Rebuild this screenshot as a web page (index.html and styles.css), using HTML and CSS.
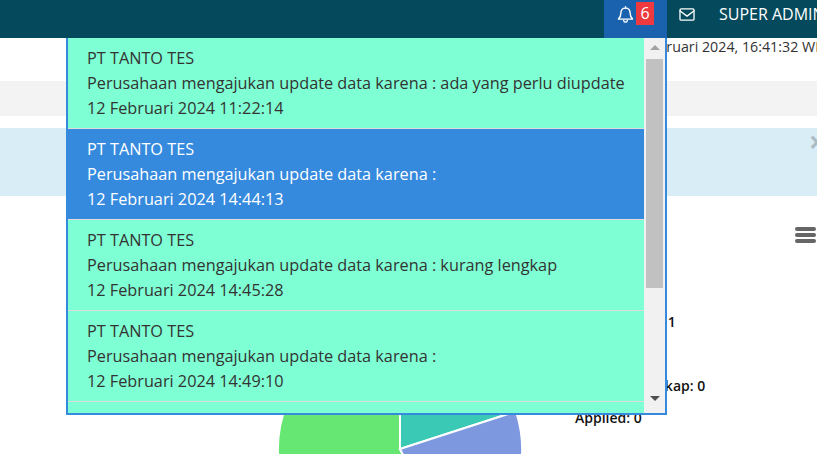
FILE: index.html
```html
<!DOCTYPE html>
<html>
  <head>
    <meta charset="utf-8">
    <title>Dashboard</title>
    <link rel="stylesheet" href="styles.css">
  </head>
  <body>
    <header class="topbar">
      <a href="#" class="nav-item notif">
        <svg class="icon" viewBox="0 0 24 24" width="17" height="19">
          <path d="M12 3c-4 0-6.500 3-6.500 7 0 4.500-1.500 6.500-3.500 8.500h20c-2-2-3.500-4-3.500-8.500 0-4-2.500-7-6.500-7z"/>
          <path d="M12 1v2M9.500 20.500c.3 1.500 1.300 2.300 2.500 2.300s2.200-.8 2.500-2.300"/>
        </svg>
        <span class="badge">6</span>
      </a>
      <a href="#" class="nav-item mail">
        <svg class="icon" viewBox="0 0 24 20" width="16" height="13">
          <rect x="1.200" y="1.200" width="21.600" height="17.600" rx="2"/>
          <path d="M1.500 4.500l10.500 8 10.500-8"/>
        </svg>
      </a>
      <a href="#" class="nav-item user">SUPER ADMINISTRATOR</a>
    </header>

    <main class="content">
      <div class="clock">Senin, 12 Februari 2024, 16:41:32 WIB</div>
      <div class="breadcrumb"></div>
      <div class="alert"><span class="alert-close">×</span></div>

      <section class="panel">
        <div class="panel-tools">
          <a href="#" class="burger"><span></span><span></span><span></span></a>
        </div>
        <div class="chart-row">
          <svg class="pie" viewBox="0 0 244 244" width="244" height="244">
            <path class="slice-green" d="M122 122L178.700 230A122 122 0 1 1 122 0z"/>
            <path class="slice-teal" d="M122 122V0A122 122 0 0 1 238 84.400z"/>
            <path class="slice-blue" d="M122 122L238 84.400A122 122 0 0 1 178.700 230z"/>
          </svg>
          <ul class="legend">
            <li>Data Update: 1</li>
            <li>Disetujui: 0</li>
            <li>Belum Dilengkap: 0</li>
            <li>Applied: 0</li>
          </ul>
        </div>
      </section>
    </main>

    <div class="notif-menu">
      <div class="notif-list">
        <a href="#" class="notif-row">
          PT TANTO TES<br>
          Perusahaan mengajukan update data karena : ada yang perlu diupdate<br>
          12 Februari 2024 11:22:14
        </a>
        <a href="#" class="notif-row active">
          PT TANTO TES<br>
          Perusahaan mengajukan update data karena :<br>
          12 Februari 2024 14:44:13
        </a>
        <a href="#" class="notif-row">
          PT TANTO TES<br>
          Perusahaan mengajukan update data karena : kurang lengkap<br>
          12 Februari 2024 14:45:28
        </a>
        <a href="#" class="notif-row">
          PT TANTO TES<br>
          Perusahaan mengajukan update data karena :<br>
          12 Februari 2024 14:49:10
        </a>
        <a href="#" class="notif-row">
          PT TANTO TES<br>
          Perusahaan mengajukan update data karena :<br>
          12 Februari 2024 14:52:40
        </a>
      </div>
      <div class="scroll">
        <span class="arrow-up"></span>
        <span class="thumb"></span>
        <span class="arrow-down"></span>
      </div>
    </div>
  </body>
</html>
```

FILE: styles.css
```css
body, html {
    padding: 0;
    margin: 0;
    height: 100%;
    overflow: hidden;
    background: #fff;
    font-family: 'Open Sans', sans-serif;
    font-size: 14px;
    color: #333;
}

a {
    text-decoration: none;
    color: inherit;
}

.topbar {
    display: flex;
    height: 38px;
    padding-left: 604px;
    background: #054a5c;
    color: #fff;
    white-space: nowrap;
    overflow: hidden;
}

.nav-item {
    display: flex;
    align-items: center;
    padding-bottom: 10px;
    box-sizing: border-box;
}

.notif {
    flex: none;
    width: 63px;
    padding-left: 13px;
    background: #1a62ae;
}

.mail {
    flex: none;
    margin-left: 12px;
}

.user {
    margin-left: 24px;
    font-size: 16px;
}

.icon {
    fill: none;
    stroke: #fff;
    stroke-width: 2;
    stroke-linejoin: round;
    stroke-linecap: round;
}

.badge {
    width: 18px;
    height: 23px;
    margin: -1px 0 0 2px;
    background: #ee3a3f;
    font-size: 16px;
    line-height: 23px;
    text-align: center;
}

.clock {
    height: 43px;
    padding-left: 578px;
    font-size: 14.250px;
    line-height: 17px;
    white-space: nowrap;
    overflow: hidden;
}

.breadcrumb {
    height: 35px;
    margin-bottom: 12px;
    background: #f3f3f3;
}

.alert {
    display: flex;
    justify-content: flex-end;
    height: 68px;
    background: #d9edf7;
    overflow: hidden;
}

.alert-close {
    margin-right: -9px;
    font-size: 30px;
    font-weight: 700;
    line-height: 28px;
    color: #000;
    opacity: .2;
}

.panel {
    height: 258px;
    overflow: hidden;
}

.panel-tools {
    display: flex;
    justify-content: flex-end;
    padding: 31px 1px 0 0;
}

.burger {
    display: flex;
    flex-direction: column;
    gap: 2px;
    width: 21px;
}

.burger span {
    height: 4px;
    border-radius: 2px;
    background: #666;
}

.chart-row {
    display: flex;
    align-items: flex-start;
}

.pie {
    flex: none;
    margin: 84px 0 0 278px;
}

.pie path {
    stroke: #fff;
    stroke-width: 2;
}

.slice-green {
    fill: #66e673;
}

.slice-teal {
    fill: #3ac9b5;
}

.slice-blue {
    fill: #7e98e0;
}

.legend {
    display: flex;
    flex-direction: column;
    gap: 12px;
    margin: 69px 0 0 53px;
    padding: 0;
    list-style: none;
    font-weight: 600;
    line-height: 20px;
    color: #111;
    white-space: nowrap;
}

/* dropdown from the bell */
.notif-menu {
    position: absolute;
    top: 38px;
    left: 66px;
    display: flex;
    width: 597px;
    height: 375px;
    border: 2px solid #358ade;
    border-top: 0;
    background: #7fffd4;
}

.notif-list {
    flex: 1;
    overflow: hidden;
}

.notif-row {
    display: block;
    height: 91px;
    padding: 8px 0 0 19px;
    box-sizing: border-box;
    border-bottom: 1px solid #ddd;
    font-size: 16.250px;
    line-height: 25px;
    color: #333;
    white-space: nowrap;
}

.notif-row.active {
    background: #358ade;
    color: #fff;
}

.scroll {
    display: flex;
    flex-direction: column;
    align-items: center;
    flex: none;
    width: 21px;
    background: #f1f1f1;
}

.arrow-up, .arrow-down {
    flex: none;
    width: 0;
    height: 0;
    border-left: 5px solid transparent;
    border-right: 5px solid transparent;
}

.arrow-up {
    margin-top: 7px;
    border-bottom: 5px solid #a3a3a3;
}

.thumb {
    flex: none;
    width: 17px;
    height: 229px;
    margin-top: 9px;
    background: #c1c1c1;
}

.arrow-down {
    margin-top: 108px;
    border-top: 5px solid #505050;
}
```
